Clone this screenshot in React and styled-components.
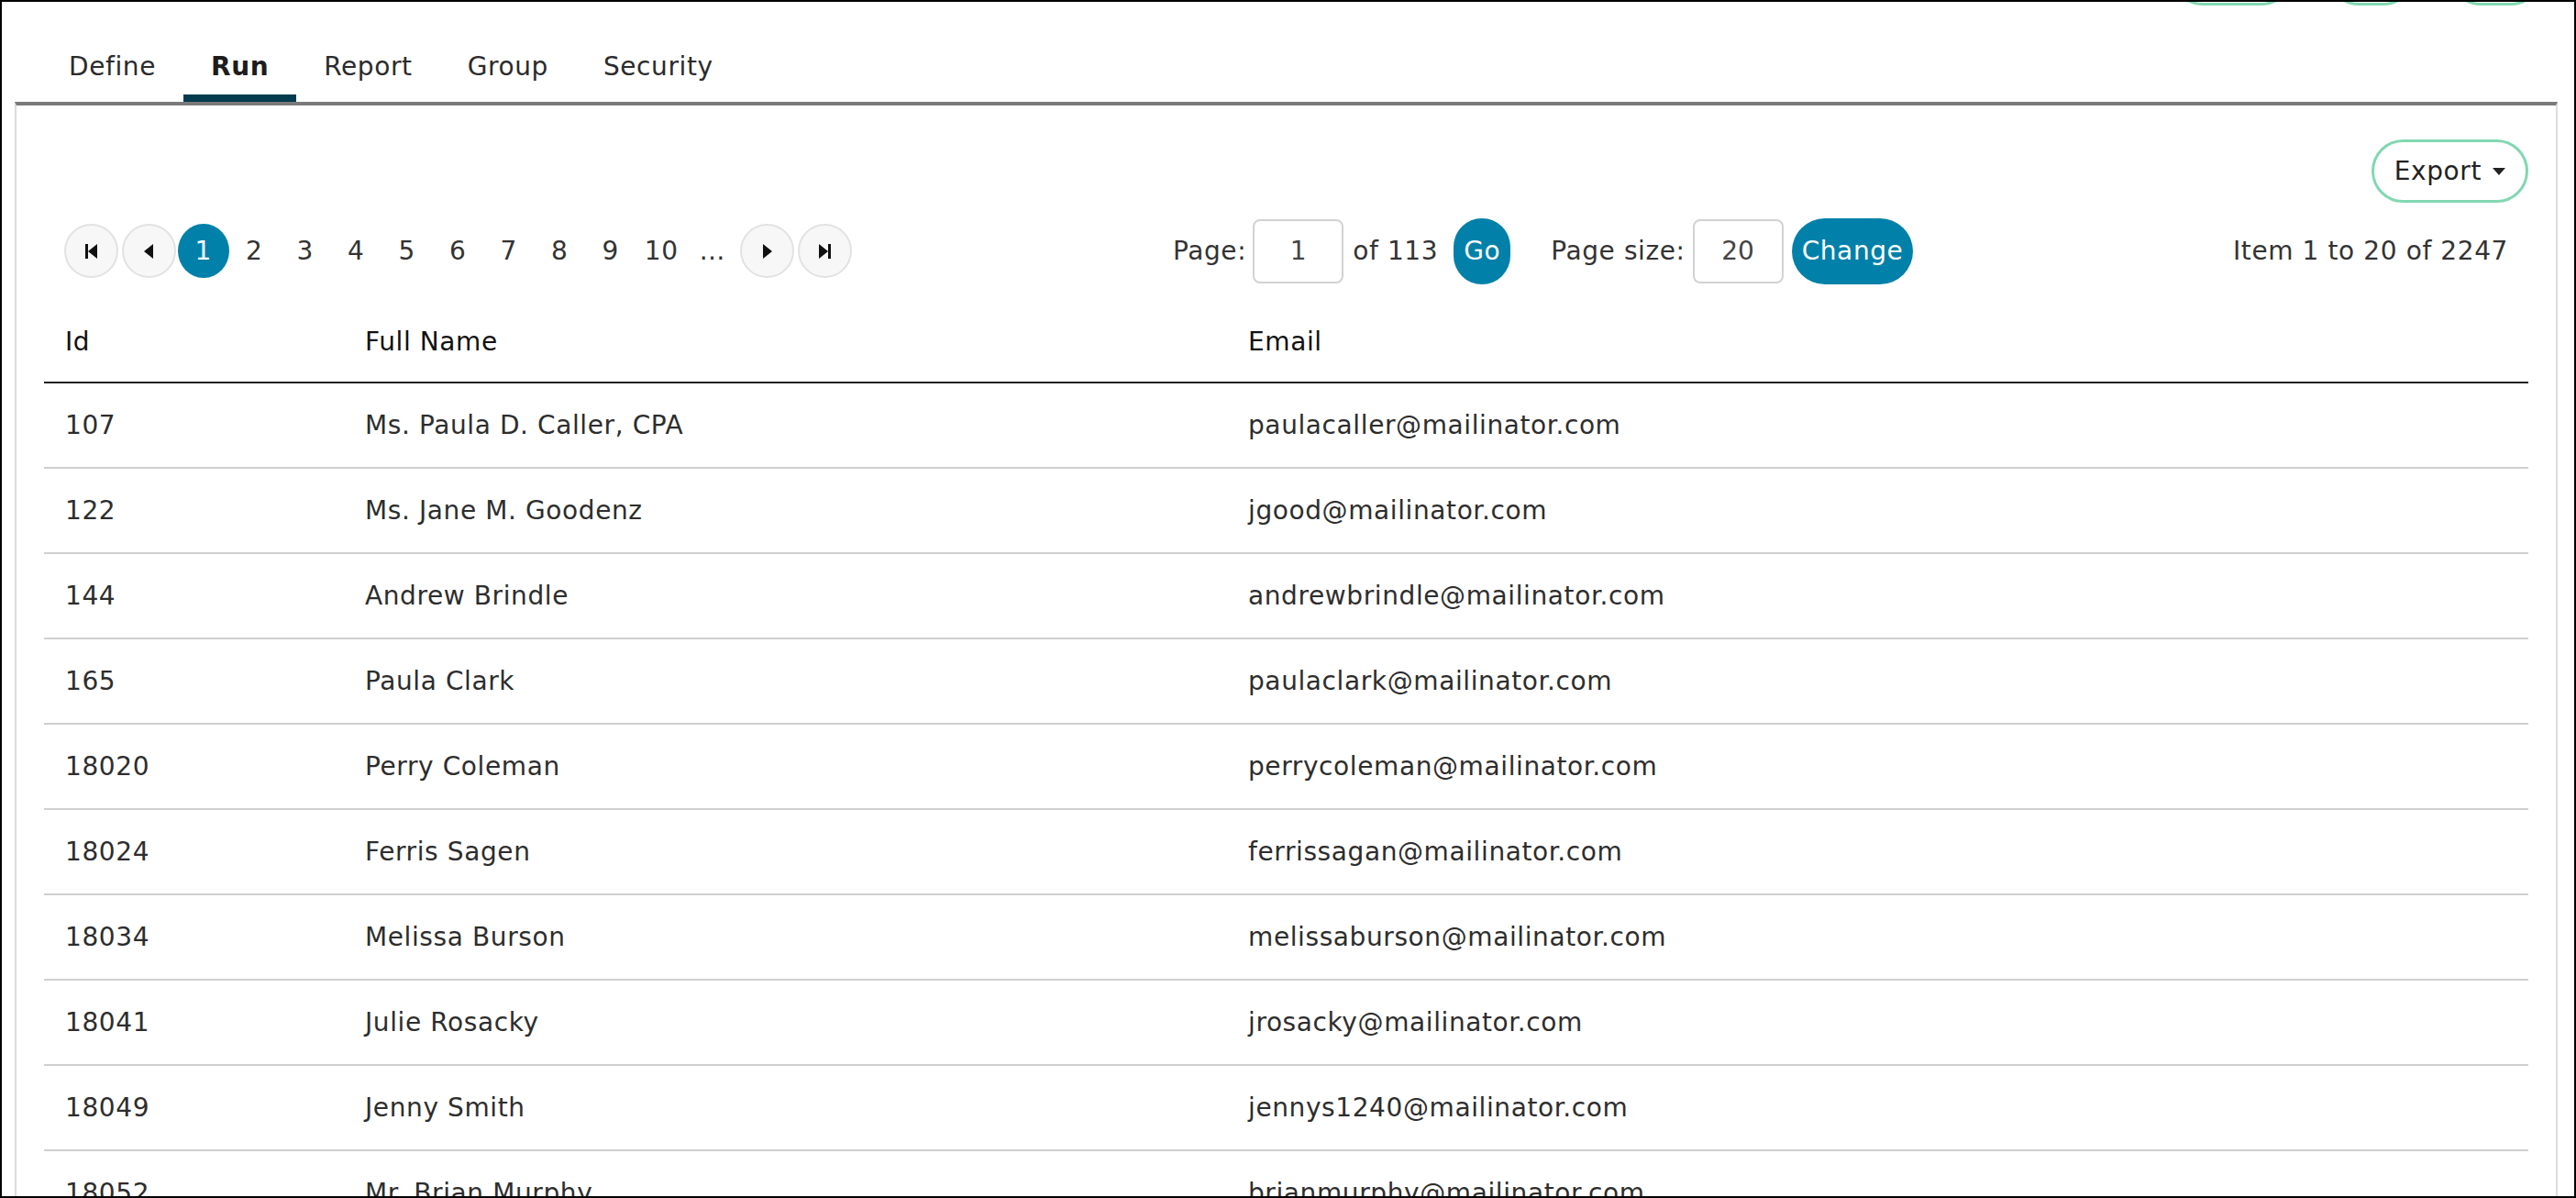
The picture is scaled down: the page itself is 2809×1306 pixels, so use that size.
import React from 'react';
import styled, { createGlobalStyle } from 'styled-components';

const GlobalStyle = createGlobalStyle`
	html, body {
		margin: 0;
		padding: 0;
		background: #fff;
	}
	body {
		font-family: "DejaVu Sans", "Open Sans", sans-serif;
		letter-spacing: 0.6px;
		color: #222;
	}
	* {
		box-sizing: border-box;
	}
`;

const Frame = styled.div`
	width: 100vw;
	height: 100vh;
	border: 2px solid #000;
	overflow: hidden;
	background: #fff;
`;

const Toolbar = styled.div`
	display: flex;
	justify-content: flex-end;
	gap: 36px;
	padding-right: 34px;
	margin-top: -66px;
`;

const ToolButton = styled.button`
	height: 70px;
	width: ${(p) => p.w}px;
	border: 3px solid #82d8b1;
	border-radius: 35px;
	background: #fff;
`;

const TabBar = styled.nav`
	display: flex;
	margin-top: 25px;
	padding-left: 43px;
`;

const Tab = styled.div`
	padding: 21px 30px 9px;
	font-size: 28px;
	line-height: 42px;
	color: ${(p) => (p.active ? '#1d1d1d' : '#2b2b2b')};
	font-weight: ${(p) => (p.active ? 700 : 400)};
	border-bottom: 8px solid ${(p) => (p.active ? '#033c4e' : 'transparent')};
`;

const Panel = styled.section`
	margin: 0 18px 0 14px;
	border-top: 4px solid #7a7a7a;
	border-left: 2px solid #dcdcdc;
	border-right: 2px solid #dcdcdc;
	padding: 37px 30px 0;
	height: 1200px;
`;

const ExportRow = styled.div`
	display: flex;
	justify-content: flex-end;
`;

const ExportButton = styled.button`
	display: flex;
	align-items: center;
	gap: 12px;
	height: 69px;
	padding: 0 22px;
	border: 3px solid #82d8b1;
	border-radius: 35px;
	background: #fff;
	font-family: inherit;
	letter-spacing: inherit;
	font-size: 28px;
	color: #222;

	&::after {
		content: '';
		border-left: 7px solid transparent;
		border-right: 7px solid transparent;
		border-top: 8px solid #222;
	}
`;

const PagerRow = styled.div`
	display: flex;
	align-items: center;
	justify-content: space-between;
	height: 73px;
	margin-top: 16px;
	padding: 0 22px 0 20px;
	font-size: 28px;
	color: #333;
`;

const Pager = styled.div`
	display: flex;
	align-items: center;
`;

const NavCircle = styled.button`
	width: 59px;
	height: 59px;
	margin: 0 2px;
	border-radius: 50%;
	border: 2px solid #e2e2e2;
	background: #f7f7f7;
	display: flex;
	align-items: center;
	justify-content: center;
	padding: 0;
`;

const PageNum = styled.span`
	width: 55.5px;
	height: 59px;
	display: flex;
	align-items: center;
	justify-content: center;
	border-radius: 50%;
	background: ${(p) => (p.active ? '#0180a9' : 'transparent')};
	color: ${(p) => (p.active ? '#fff' : '#333')};
`;

const Jump = styled.div`
	display: flex;
	align-items: center;
`;

const Label = styled.span`
	margin-right: ${(p) => p.mr || 0}px;
	margin-left: ${(p) => p.ml || 0}px;
	white-space: nowrap;
`;

const BoxInput = styled.input`
	width: 99px;
	height: 70px;
	border: 2px solid #d2d2d2;
	border-radius: 8px;
	text-align: center;
	font-family: inherit;
	font-size: 28px;
	color: #444;
	margin-right: ${(p) => p.mr || 0}px;
	outline: none;
`;

const BlueButton = styled.button`
	height: 72px;
	padding: 0 11px;
	border: none;
	border-radius: 36px;
	background: #0180a9;
	color: #fff;
	font-family: inherit;
	letter-spacing: inherit;
	font-size: 28px;
	margin-left: ${(p) => p.ml || 0}px;
`;

const Count = styled.span`
	white-space: nowrap;
`;

const Table = styled.div`
	margin-top: 15px;
	font-size: 28px;
`;

const Row = styled.div`
	display: grid;
	grid-template-columns: 327px 963px 1fr;
	align-items: center;
	height: 93px;
	padding-top: ${(p) => (p.head ? 4 : 0)}px;
	border-bottom: 2px solid ${(p) => (p.head ? '#222' : '#cfcfcf')};
	color: ${(p) => (p.head ? '#111' : '#2d2d2d')};
`;

const Cell = styled.div`
	padding: 0 23px;
	white-space: nowrap;
`;

const Icon = ({ type }) => {
	const tri = {
		first: 'M15 2 L5 10 L15 18 Z',
		prev: 'M13 2 L3 10 L13 18 Z',
		next: 'M5 2 L15 10 L5 18 Z',
		last: 'M3 2 L13 10 L3 18 Z',
	}[type];
	return (
		<svg width="18" height="20" viewBox="0 0 18 20">
			{type === 'first' && <rect x="2" y="2" width="3" height="16" fill="#111" />}
			{type === 'last' && <rect x="13" y="2" width="3" height="16" fill="#111" />}
			<path d={tri} fill="#111" />
		</svg>
	);
};

const rows = [
	['107', 'Ms. Paula D. Caller, CPA', 'paulacaller@mailinator.com'],
	['122', 'Ms. Jane M. Goodenz', 'jgood@mailinator.com'],
	['144', 'Andrew Brindle', 'andrewbrindle@mailinator.com'],
	['165', 'Paula Clark', 'paulaclark@mailinator.com'],
	['18020', 'Perry Coleman', 'perrycoleman@mailinator.com'],
	['18024', 'Ferris Sagen', 'ferrissagan@mailinator.com'],
	['18034', 'Melissa Burson', 'melissaburson@mailinator.com'],
	['18041', 'Julie Rosacky', 'jrosacky@mailinator.com'],
	['18049', 'Jenny Smith', 'jennys1240@mailinator.com'],
	['18052', 'Mr. Brian Murphy', 'brianmurphy@mailinator.com'],
	['18060', 'Ms. Karen Walsh', 'karenwalsh@mailinator.com'],
];

const tabs = ['Define', 'Run', 'Report', 'Group', 'Security'];
const pages = ['1', '2', '3', '4', '5', '6', '7', '8', '9', '10', '…'];

const App = () => {
	return (
		<>
			<GlobalStyle />
			<Frame>
				<Toolbar>
					<ToolButton w={134} />
					<ToolButton w={97} />
					<ToolButton w={103} />
				</Toolbar>
				<TabBar>
					{tabs.map((t) => (
						<Tab key={t} active={t === 'Run'}>{t}</Tab>
					))}
				</TabBar>
				<Panel>
					<ExportRow>
						<ExportButton>Export</ExportButton>
					</ExportRow>
					<PagerRow>
						<Pager>
							<NavCircle><Icon type="first" /></NavCircle>
							<NavCircle><Icon type="prev" /></NavCircle>
							{pages.map((p) => (
								<PageNum key={p} active={p === '1'}>{p}</PageNum>
							))}
							<NavCircle><Icon type="next" /></NavCircle>
							<NavCircle><Icon type="last" /></NavCircle>
						</Pager>
						<Jump>
							<Label mr={7}>Page:</Label>
							<BoxInput defaultValue="1" mr={10} />
							<Label>of 113</Label>
							<BlueButton ml={17}>Go</BlueButton>
							<Label ml={44} mr={8}>Page size:</Label>
							<BoxInput defaultValue="20" />
							<BlueButton ml={9}>Change</BlueButton>
						</Jump>
						<Count>Item 1 to 20 of 2247</Count>
					</PagerRow>
					<Table>
						<Row head>
							<Cell>Id</Cell>
							<Cell>Full Name</Cell>
							<Cell>Email</Cell>
						</Row>
						{rows.map((r) => (
							<Row key={r[0]}>
								<Cell>{r[0]}</Cell>
								<Cell>{r[1]}</Cell>
								<Cell>{r[2]}</Cell>
							</Row>
						))}
					</Table>
				</Panel>
			</Frame>
		</>
	);
};

export default App;
